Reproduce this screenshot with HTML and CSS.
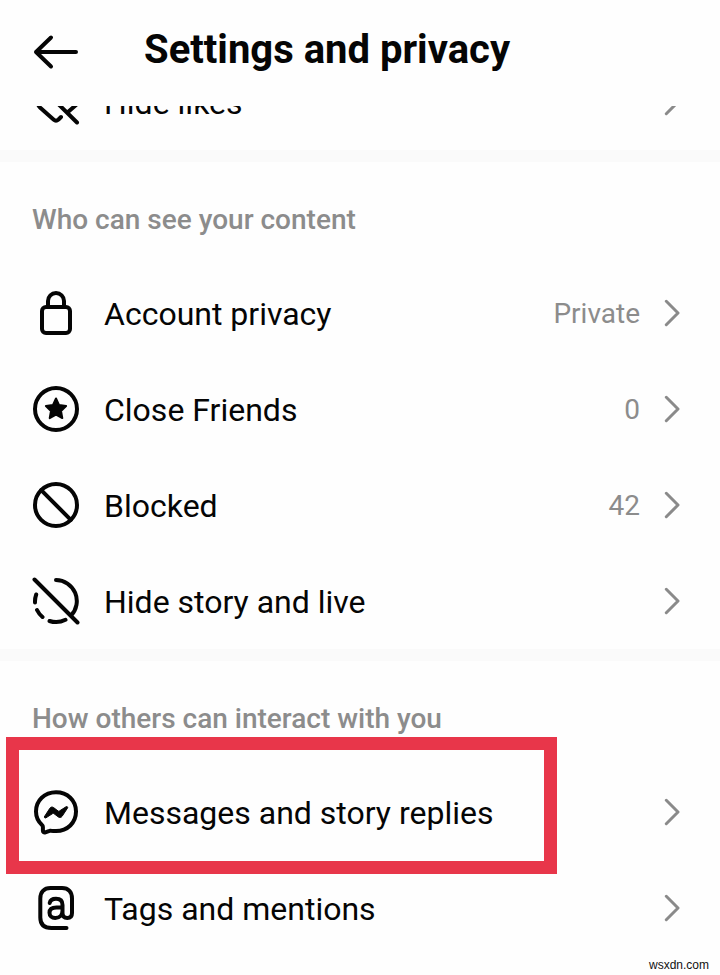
FILE: index.html
```html
<!DOCTYPE html>
<html lang="en">
<head>
<meta charset="utf-8">
<meta name="viewport" content="width=device-width, initial-scale=1">
<title>Settings and privacy</title>
<link rel="stylesheet" href="styles.css">
</head>
<body>
<svg class="defs" aria-hidden="true">
  <symbol id="chevron" viewBox="0 0 16 28"><path d="M2.3 2.3 14 14 2.3 25.7"/></symbol>
</svg>
<header class="topbar">
  <button class="back" type="button" aria-label="Back">
    <svg class="icon" viewBox="0 0 48 48"><path d="M44 24H4M19 9.5 4 24l15 14.5"/></svg>
  </button>
  <h1 class="title">Settings and privacy</h1>
</header>
<main>
  <section class="group group-scrolled">
    <a class="row" href="#likes">
      <svg class="icon" viewBox="0 0 48 48"><path d="M2.5 2.500 45 44.500M4 17c0 5 1 9 4 12.500L21.500 41.500q2.500 2.300 5 0l2.500-2.500M36 34l8-7"/></svg>
      <span class="label">Hide likes</span>
      <svg class="chevron"><use href="#chevron"/></svg>
    </a>
  </section>
  <section class="group">
    <h2 class="heading">Who can see your content</h2>
    <a class="row" href="#privacy">
      <svg class="icon" viewBox="0 0 48 48"><rect x="10" y="18" width="28" height="26" rx="4"/><path d="M16 18v-6a8 8 0 0 1 16 0v6"/></svg>
      <span class="label">Account privacy</span>
      <span class="value">Private</span>
      <svg class="chevron"><use href="#chevron"/></svg>
    </a>
    <a class="row" href="#friends">
      <svg class="icon" viewBox="0 0 48 48"><circle cx="24" cy="24" r="21"/><path class="solid star" d="m24 13.5 3.100 6.600 7 .9-5.100 5 1.300 7.100-6.300-3.400-6.300 3.400 1.300-7.100-5.100-5 7-.9z"/></svg>
      <span class="label">Close Friends</span>
      <span class="value">0</span>
      <svg class="chevron"><use href="#chevron"/></svg>
    </a>
    <a class="row" href="#blocked">
      <svg class="icon" viewBox="0 0 48 48"><circle cx="24" cy="24" r="21"/><path d="m9.2 9.2 29.6 29.6"/></svg>
      <span class="label">Blocked</span>
      <span class="value">42</span>
      <svg class="chevron"><use href="#chevron"/></svg>
    </a>
    <a class="row" href="#story">
      <svg class="icon" viewBox="0 0 48 48"><path d="m2.5 2.5 43 43M24 3a21 21 0 0 1 15 35.5M33.5 42.8a21 21 0 0 1-16 1.2M10.5 40a21 21 0 0 1-5.5-7M3 25.5a21 21 0 0 1 1.2-8"/></svg>
      <span class="label">Hide story and live</span>
      <svg class="chevron"><use href="#chevron"/></svg>
    </a>
  </section>
  <section class="group">
    <h2 class="heading">How others can interact with you</h2>
    <a class="row highlighted" href="#messages">
      <svg class="icon" viewBox="0 0 48 48"><path d="M24 43c11.5 0 20-8.300 20-19.500S35.500 4.300 24 4.300 4 12.500 4 23.500c0 5.500 2.200 10 6 13.500.7.600.9 1.200.9 2v3.500c0 1.500 1.100 2.300 2.400 1.800l4.200-1.500c.5-.2 1-.2 1.500-.1 1.500.2 3 .3 5 .3z"/><path class="solid" d="m12.500 28.500 5.400-8.300c.9-1.300 2.500-1.500 3.700-.6l4.500 3.400c.4.300.9.300 1.300 0l6.600-4.200c1-.6 2.200.3 1.500 1.300l-5.400 8.200c-.9 1.300-2.500 1.600-3.700.7l-4.500-3.400c-.4-.3-.9-.3-1.300 0l-6.600 4.200c-1 .6-2.200-.3-1.500-1.300z"/></svg>
      <span class="label">Messages and story replies</span>
      <svg class="chevron"><use href="#chevron"/></svg>
    </a>
    <a class="row" href="#tags">
      <svg class="icon" viewBox="0 0 48 48"><path d="M34.500 44H19.500C12 44 8.300 40.500 8.300 33.500v-19C8.300 8 12 4 18.500 4h11.500C36.500 4 40 8 40 14.500v14.500c0 3.200-1.700 5-4.700 5s-4.800-1.800-4.800-5V21c0-4-2.500-6.200-6.500-6.200-3.400 0-5.800 1.500-6.300 4.200M30.500 23.500h-6c-4.500 0-7 1.900-7 5.300 0 3.200 2.300 5.200 5.700 5.200 4.400 0 7.300-3 7.300-7.500"/></svg>
      <span class="label">Tags and mentions</span>
      <svg class="chevron"><use href="#chevron"/></svg>
    </a>
  </section>
</main>
<footer class="credit">wsxdn.com</footer>
</body>
</html>
```
FILE: styles.css
```css
* {
  box-sizing: border-box;
}

body {
  position: relative;
  min-height: 100vh;
  margin: 0;
  background: #fefefe;
  color: #050505;
  font-family: Roboto, "Liberation Sans", sans-serif;
}

.defs {
  position: absolute;
  width: 0;
  height: 0;
}

.topbar {
  display: flex;
  align-items: center;
  gap: 64px;
  height: 106px;
  padding: 0 32px 2px;
}

.back {
  display: flex;
  padding: 0;
  border: 0;
  background: none;
  color: inherit;
}

.title {
  margin: 0;
  padding-bottom: 4px;
  font-size: 40px;
  line-height: 48px;
  font-weight: 700;
  white-space: nowrap;
}

.icon,
.chevron {
  flex: none;
  fill: none;
  stroke: currentColor;
  stroke-linecap: round;
  stroke-linejoin: round;
}

.icon {
  width: 48px;
  height: 48px;
  stroke-width: 4;
}

.solid {
  fill: currentColor;
  stroke-width: 1;
}

.star {
  stroke-width: 2;
}

.chevron {
  width: 16px;
  height: 28px;
  color: #8a8a8a;
  stroke-width: 3;
}

.group + .group {
  border-top: 12px solid #fafafa;
}

/* List scrolled under the top bar */
.group-scrolled {
  display: flex;
  align-items: flex-end;
  height: 44px;
  overflow: hidden;
}

.group-scrolled .row {
  flex: 1;
}

.heading {
  margin: 0;
  padding: 42px 32px 29px;
  color: #8c8c8c;
  font-size: 28px;
  line-height: 32px;
  font-weight: 500;
}

.row {
  position: relative;
  display: flex;
  align-items: center;
  gap: 24px;
  height: 96px;
  padding: 0 40px 0 32px;
  color: inherit;
  text-decoration: none;
}

.label {
  flex: 1;
  padding-top: 2px;
  font-size: 32px;
  line-height: 40px;
}

.value {
  padding-top: 2px;
  color: #8c8c8c;
  font-size: 28px;
  line-height: 32px;
}

.highlighted::after {
  content: "";
  position: absolute;
  inset: -27px 163px -14px 6px;
  border: 13px solid #e8364a;
}

.credit {
  position: absolute;
  right: 11px;
  bottom: 2px;
  color: #111;
  font: 12px/16px "Liberation Sans", sans-serif;
}
```
